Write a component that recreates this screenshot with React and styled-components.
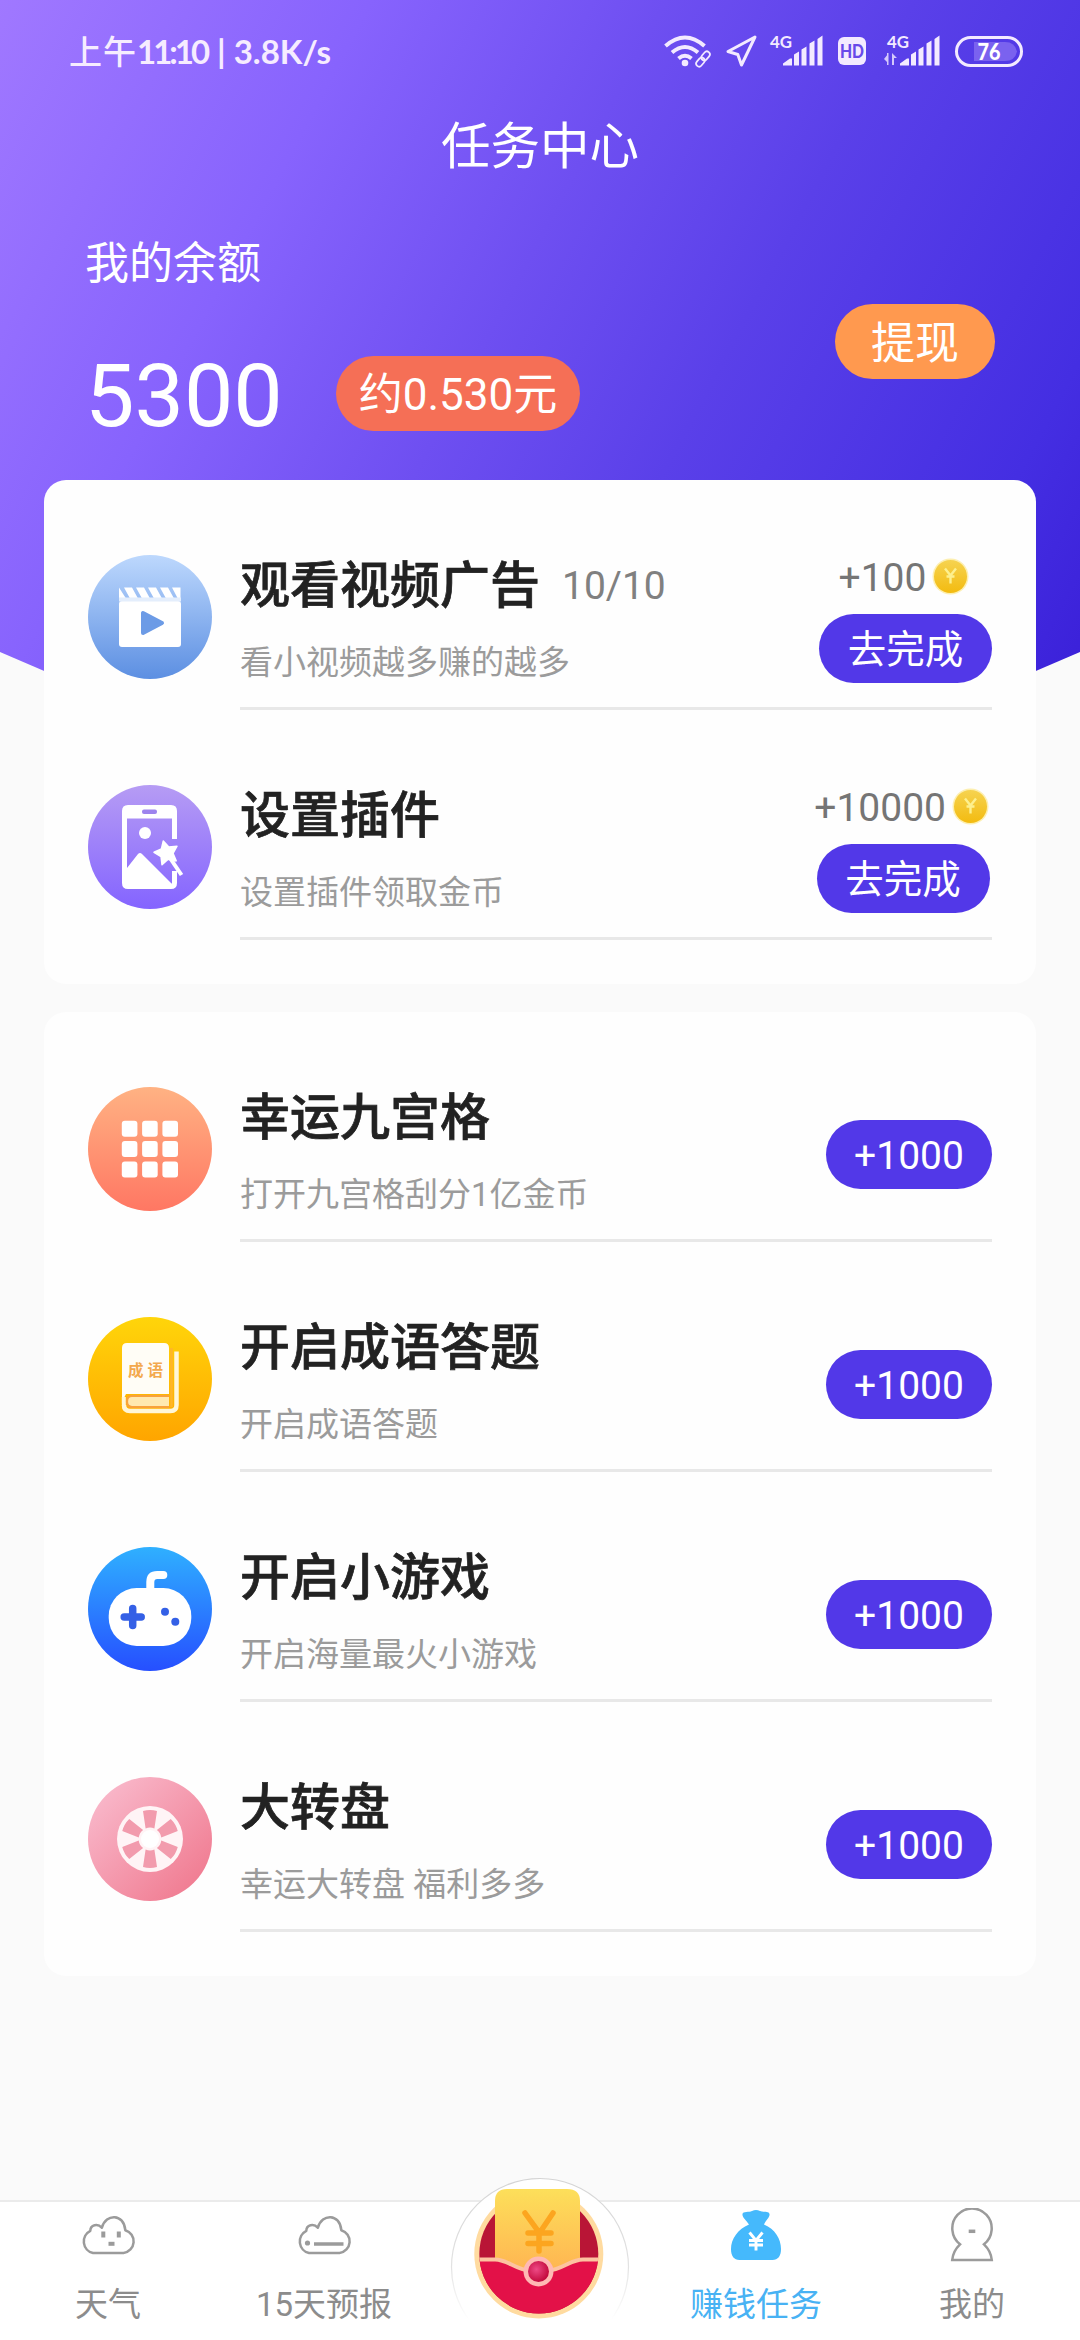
import React from 'react';
import styled, { createGlobalStyle } from 'styled-components';

const GlobalStyle = createGlobalStyle`
  * { box-sizing: border-box; }
  body { margin: 0; background: #fafafa; }
  svg { display: block; flex: none; }
`;

const Page = styled.div`
  position: relative;
  display: flex;
  flex-direction: column;
  width: 1080px;
  height: 2340px;
  overflow: hidden;
  background: #fafafa;
  font-family: Roboto, 'Noto Sans CJK SC', sans-serif;

  &::before {
    content: '';
    position: absolute;
    inset: 0 0 auto 0;
    height: 884px;
    background: linear-gradient(118deg, #a078ff 0%, #8763fd 24%, #6e4ff1 43%, #5a40e9 59%, #442ee2 82%, #3a1fd8 94%);
    clip-path: polygon(0 0, 100% 0, 100% 652px, 50% 884px, 0 652px);
  }
`;

const StatusBar = styled.div`
  position: relative;
  display: flex;
  justify-content: space-between;
  align-items: center;
  height: 102px;
  padding: 0 57px 0 69px;
  color: #f6ecff;
`;

const Clock = styled.div`
  display: flex;
  align-items: center;
  font-family: Lato, 'Noto Sans CJK SC', sans-serif;
  font-size: 33px;
  font-weight: 700;
  line-height: 40px;
  white-space: pre;
`;

const Meridiem = styled.span`
  font-weight: 500;
  letter-spacing: 1px;
`;

const Time = styled.span`
  margin-right: 2px;
  letter-spacing: -3px;
`;

const StatusIcons = styled.div`
  display: flex;
  align-items: center;
`;

const StatusSvg = styled.svg`
  margin-left: ${(p) => p.$gap || 0}px;
  overflow: visible;
  font-family: Lato, sans-serif;
  font-weight: 700;
`;

const TitleBar = styled.h1`
  position: relative;
  margin: 0;
  height: 86px;
  padding-top: 2px;
  line-height: 86px;
  text-align: center;
  color: #fff;
  font-size: 49.5px;
  font-weight: 400;
`;

const Balance = styled.section`
  position: relative;
  display: flex;
  justify-content: space-between;
  align-items: flex-start;
  height: 292px;
  padding: 46px 85px 0 85px;
  color: #fff;
`;

const BalanceLabel = styled.div`
  font-size: 44px;
  line-height: 60px;
`;

const BalanceRow = styled.div`
  display: flex;
  align-items: center;
  height: 104px;
  margin-top: 47px;
`;

const Amount = styled.div`
  width: 251px;
  font-size: 88px;
  line-height: 104px;
  padding-top: 6px;
`;

const Pill = styled.div`
  display: flex;
  align-items: center;
  justify-content: center;
  flex: none;
  width: ${(p) => p.$width}px;
  height: ${(p) => p.$height}px;
  margin-top: ${(p) => p.$top || 0}px;
  padding-top: 4px;
  border-radius: 38px;
  background: ${(p) => p.$color};
  color: #fff;
  font-size: ${(p) => p.$size}px;
  line-height: 1;
  white-space: nowrap;
`;

const Card = styled.section`
  position: relative;
  margin: 0 44px 28px;
  padding-bottom: 44px;
  border-radius: 22px;
  background: #fefefe;
`;

const Row = styled.div`
  display: flex;
  height: 230px;
  padding: 0 44px;
`;

const IconSlot = styled.div`
  padding-top: 75px;
  margin-right: 28px;
`;

const RowBody = styled.div`
  display: flex;
  justify-content: space-between;
  flex: 1;
  border-bottom: 3px solid #e8e8e8;
`;

const TitleLine = styled.div`
  display: flex;
  align-items: center;
  gap: 22px;
  height: 60px;
  margin-top: 76px;
`;

const RowTitle = styled.div`
  color: #222;
  font-size: 50px;
  font-weight: 500;
  line-height: 60px;
  -webkit-text-stroke: 0.7px #222;
`;

const Progress = styled.div`
  color: #808080;
  font-size: 39px;
  line-height: 46px;
`;

const Subtitle = styled.div`
  margin-top: 22px;
  color: #9b9b9b;
  font-size: 33px;
  font-weight: 400;
  line-height: 50px;
`;

const Action = styled.div`
  display: flex;
  flex-direction: column;
  align-items: center;
  padding-top: ${(p) => p.$top}px;
`;

const Reward = styled.div`
  display: flex;
  align-items: center;
  height: 46px;
  margin-bottom: 13px;
  color: #757575;
  font-size: 39px;
  line-height: 48px;
`;

const CoinSvg = styled.svg`
  margin: 0 2px 3px 5px;
`;

const Nav = styled.nav`
  position: relative;
  display: flex;
  height: 140px;
  margin-top: auto;
  border-top: 2px solid #ebebeb;
  background: #fff;
`;

const Tab = styled.div`
  display: flex;
  flex-direction: column;
  align-items: center;
  width: 216px;
  color: ${(p) => (p.$active ? '#48b2f4' : '#8c8c8c')};
  font-size: 33px;
`;

const TabIcon = styled.div`
  display: flex;
  align-items: center;
  height: 66px;
`;

const TabLabel = styled.div`
  margin-top: 12px;
  line-height: 50px;
`;

const CenterButton = styled.div`
  width: 216px;
  margin-top: -32px;
  display: flex;
  justify-content: center;
`;

function Circle({ id, from, to, x2 = 0, children }) {
  return (
    <svg width="124" height="124" viewBox="0 0 124 124">
      <defs>
        <linearGradient id={id} x1="0" y1="0" x2={x2} y2="1">
          <stop offset="0" stopColor={from} />
          <stop offset="1" stopColor={to} />
        </linearGradient>
      </defs>
      <circle cx="62" cy="62" r="62" fill={`url(#${id})`} />
      {children}
    </svg>
  );
}

const starPoints = (cx, cy, outer, inner, turn) =>
  Array.from({ length: 10 }, (_, i) => {
    const r = i % 2 ? inner : outer;
    const a = ((i * 36 + turn) * Math.PI) / 180;
    return `${(cx + r * Math.sin(a)).toFixed(1)},${(cy - r * Math.cos(a)).toFixed(1)}`;
  }).join(' ');

const VideoIcon = () => (
  <Circle id="video" from="#bdd8fd" to="#5c8fe2">
    <rect x="31" y="46" width="62" height="46" rx="3" fill="#fff" />
    <path d="M31 43.500V32.500l7 11zM36 32.500h8l6 11h-8zM48 32.500h8l6 11h-8zM60 32.500h8l6 11h-8zM72 32.500h8l6 11h-8zM84 32.500h8.500v10.500h-3z" fill="#fff" />
    <path d="M31 42.500h62v4H31z" fill="#e4eefc" />
    <path d="M55 58v20l19-10z" fill="#6c9be6" stroke="#6c9be6" strokeWidth="4" strokeLinejoin="round" />
  </Circle>
);

const PhoneIcon = () => (
  <Circle id="phone" from="#b69cf4" to="#8464ff">
    <path d="M86.500 54V26q0-3.500-3.500-3.500H40q-3.500 0-3.500 3.500v72q0 3.500 3.500 3.500h43q3.500 0 3.500-3.500V86" fill="none" stroke="#fff" strokeWidth="5" />
    <path d="M37 22h49v11.500H37zM39 83l11-14q2-2 4 0l30 30v3H39z" fill="#fff" />
    <rect x="54" y="24.500" width="15" height="4.500" rx="2" fill="#9d84ee" />
    <circle cx="57" cy="48" r="6" fill="#fff" />
    <polygon points={starPoints(78.5, 68, 12.5, 6.5, -15)} fill="#fff" stroke="#fff" strokeWidth="1.500" strokeLinejoin="round" />
    <path d="M82 73l11.500 17" stroke="#fff" strokeWidth="4" />
  </Circle>
);

const GridIcon = () => (
  <Circle id="grid" from="#ffb283" to="#ff7763">
    {[0, 1, 2].map((r) =>
      [0, 1, 2].map((c) => (
        <rect key={`${r}${c}`} x={33.8 + c * 20.3} y={33.8 + r * 20.3} width="15.600" height="16" rx="3" fill="#fff" />
      ))
    )}
  </Circle>
);

const BookIcon = () => (
  <Circle id="book" from="#ffd50a" to="#ffa500">
    <path d="M88.500 34.500V88q0 6-6 6H42q-6 0-6-6" fill="none" stroke="#fff6d8" strokeWidth="4.500" />
    <path d="M39 26h37q5 0 5 5v46H38l-4 8V31q0-5 5-5z" fill="#fffdf6" />
    <path d="M33.800 80h4v12h-3q-1-3-1-6z" fill="#fff6d8" />
    <path d="M81 79H44q-5 0-5 5.500t5 5.500h37" fill="#ffe9b0" stroke="#f8a23c" strokeWidth="2.200" />
    <path d="M83.500 31v59" stroke="#ffb52a" strokeWidth="2.500" />
    <text x="57.500" y="59" fontSize="15.500" fontWeight="700" textAnchor="middle" textLength="35" fill="#f3a94e">成语</text>
  </Circle>
);

const GamepadIcon = () => (
  <Circle id="game" from="#2fb0ff" to="#264fff">
    <path d="M62.300 44v-9q0-7 7-7h6" fill="none" stroke="#fff" strokeWidth="8" strokeLinecap="round" />
    <rect x="20.700" y="41" width="82.600" height="58" rx="28" fill="#fff" />
    <path d="M44.700 61.500v17M36.200 70h17" stroke="#3460e6" strokeWidth="7.500" strokeLinecap="round" />
    <circle cx="77" cy="64.700" r="4" fill="#3460e6" />
    <circle cx="87.300" cy="74.700" r="4" fill="#3460e6" />
  </Circle>
);

const WheelIcon = () => (
  <Circle id="wheel" from="#fac0d2" to="#ef7389" x2={1}>
    <circle cx="62" cy="62" r="33" fill="#fff4f6" />
    {[0, 60, 120, 180, 240, 300].map((a) => (
      <path key={a} d="M55 34q7-2 14 0l-2.600 17.500q-4.400-1.800-8.800 0z" fill="#f29bad" transform={`rotate(${a} 62 62)`} />
    ))}
    <circle cx="62" cy="62" r="9" fill="#fff" />
  </Circle>
);

const Coin = () => (
  <CoinSvg width="39" height="39" viewBox="0 0 39 39">
    <defs>
      <linearGradient id="coin" x1="0" y1="0" x2="0" y2="1">
        <stop offset="0" stopColor="#f6d350" />
        <stop offset="1" stopColor="#f3bb10" />
      </linearGradient>
    </defs>
    <circle cx="19.500" cy="19.500" r="18" fill="#fdefb0" />
    <circle cx="19.500" cy="19.500" r="16.500" fill="url(#coin)" />
    <path d="M14 11.500l5.500 7 5.500-7M19.500 18v8.500M15.500 19.500h8" fill="none" stroke="#fdf08e" strokeWidth="2.400" />
  </CoinSvg>
);

const CLOUD = 'M15 39A11.900 11.900 0 0 1 12.300 16.800C12.500 11 19.500 8.800 23.800 13.800C28-1 46-.5 47.300 16.200A11.700 11.700 0 0 1 45.500 39Z';

const CloudIcon = ({ children }) => (
  <svg width="60" height="42" viewBox="0 0 60 42" fill="none" stroke="#9b9b9b" strokeWidth="2.500" strokeLinejoin="round">
    <path d={CLOUD} />
    {children}
  </svg>
);

const WeatherIcon = () => (
  <CloudIcon>
    <path d="M25.300 17.500v6M40.800 17.500v6" strokeWidth="4" />
    <path d="M30.500 29.800h6" strokeWidth="4" />
  </CloudIcon>
);

const ForecastIcon = () => (
  <CloudIcon>
    <circle cx="13.500" cy="29" r="2.600" fill="#9b9b9b" stroke="none" />
    <path d="M20 30h29.500" strokeWidth="3.500" />
  </CloudIcon>
);

const BagIcon = () => (
  <svg width="50" height="50" viewBox="0 0 50 50">
    <path
      d="M18 14.500C15 10 11 7.500 11.500 4 12 1 18 2.500 21 1q4-2 8 0c3 1.500 9 0 9.500 3 .5 3.500-3.500 6-5.500 10.500C44 19 50 29 50 39c0 7-3 11-8.500 11h-33C3 50 0 46 0 39c0-10 7-20 18-24.500z"
      fill="#45b9fc"
    />
    <path d="M18.500 22.500l6.500 8 6.500-8M25 30v10.500M18 30.500h14M18 35h14" fill="none" stroke="#fff" strokeWidth="2.900" />
  </svg>
);

const UserIcon = () => (
  <svg width="44" height="54" viewBox="0 0 44 54" fill="none" stroke="#9b9b9b" strokeWidth="2.500">
    <path d="M10 36.300A19.700 20 0 1 1 34 36.300Q41 43 41.800 52H2.200Q3 43 10 36.300z" />
    <path d="M18.700 23.300h6.600" strokeWidth="3.500" />
  </svg>
);

const EnvelopeIcon = () => (
  <svg width="200" height="172" viewBox="0 0 200 172">
    <defs>
      <linearGradient id="note" x1="0" y1="0" x2="0" y2="1">
        <stop offset="0" stopColor="#fddf5a" />
        <stop offset="1" stopColor="#ffae50" />
      </linearGradient>
      <linearGradient id="rim" x1="0" y1="0" x2="0" y2="1">
        <stop offset="0" stopColor="#d4d4d4" />
        <stop offset="0.500" stopColor="#e2e2e2" />
        <stop offset="0.800" stopColor="#fff" />
      </linearGradient>
      <radialGradient id="bead" cx="0.400" cy="0.400" r="0.600">
        <stop offset="0" stopColor="#ee4a86" />
        <stop offset="1" stopColor="#c40a3e" />
      </radialGradient>
      <clipPath id="pouch">
        <circle cx="98.800" cy="84" r="59.500" />
      </clipPath>
    </defs>
    <circle cx="100" cy="97" r="88.500" fill="#fff" stroke="url(#rim)" strokeWidth="1.200" />
    <circle cx="98.800" cy="84" r="64.500" fill="#ffdba0" />
    <circle cx="98.800" cy="84" r="59.500" fill="#b91536" />
    <path d="M55 115V31q0-12 12-12h60q13 0 13 12v84z" fill="url(#note)" />
    <g clipPath="url(#pouch)">
      <path d="M30 89.500h25c14 0 20 12 44 12s30-12 44-12h27V160H30z" fill="#e31148" stroke="#fdc3a0" strokeWidth="4" />
    </g>
    <path d="M85 43l14.500 20L113 43M99 61v20M88 63h23M88 73.500h23" fill="none" stroke="#fca51f" strokeWidth="5.500" strokeLinecap="round" />
    <circle cx="98.500" cy="101.500" r="15" fill="#ffb9b4" />
    <circle cx="98.500" cy="101.500" r="10.500" fill="url(#bead)" />
  </svg>
);

const WifiIcon = () => (
  <StatusSvg width="48" height="34" viewBox="0 0 48 34" fill="none" stroke="#f3eaff" strokeWidth="4">
    <path d="M1.500 12Q21-5 40.500 12M8 18.500Q21 7.500 34 18.500M14.500 24.500Q21 19 27.500 24.500" />
    <circle cx="21" cy="29" r="3.300" fill="#f3eaff" stroke="none" />
    <g strokeWidth="1.700" transform="rotate(-50 39 25)">
      <rect x="30" y="22" width="10" height="6" rx="3" />
      <rect x="38" y="22" width="10" height="6" rx="3" />
    </g>
  </StatusSvg>
);

const LocationIcon = () => (
  <StatusSvg $gap={14} width="32" height="32" viewBox="0 0 32 32" fill="none" stroke="#f3eaff" strokeWidth="3" strokeLinejoin="round">
    <path d="M29 2L2 16.500l9.800 3L15.500 30z" />
  </StatusSvg>
);

const SignalIcon = ({ data, gap }) => (
  <StatusSvg $gap={gap} width="57" height="34" viewBox="0 0 57 34" fill="#f3eaff">
    <text x="3" y="14" fontSize="17" textLength="22" lengthAdjust="spacingAndGlyphs">4G</text>
    {data && <path d="M4 20v9l-4-4zM3 19h1.500v12H3zM8 19l5 5H10v7H8z" opacity="0.800" />}
    <path d="M16 31.500v-2l7-5h2v7zM27 20.500l5-3v14h-5zM34.500 15.500l5-3v19h-5zM42.500 9.500l5-3v25h-5zM50.500 5l5-3.500v30h-5z" />
  </StatusSvg>
);

const HdIcon = () => (
  <StatusSvg $gap={14} width="28" height="28" viewBox="0 0 28 28">
    <rect width="28" height="28" rx="6" fill="#f3eaff" />
    <text x="14" y="20.500" fontSize="18" fontWeight="900" textAnchor="middle" textLength="24" lengthAdjust="spacingAndGlyphs" fill="#6849ea">HD</text>
  </StatusSvg>
);

const BatteryIcon = () => (
  <StatusSvg $gap={14} width="68" height="31" viewBox="0 0 68 31">
    <rect x="1.500" y="1.500" width="65" height="28" rx="14" fill="none" stroke="#f3eaff" strokeWidth="3" />
    <path d="M19 6h31q10 0 12 9.500-2 9.500-12 9.500H19z" fill="#7a62ef" />
    <text x="34" y="23.500" fontSize="23.500" fontWeight="900" textAnchor="middle" textLength="23" lengthAdjust="spacingAndGlyphs" fill="#fff">76</text>
  </StatusSvg>
);

const dailyTasks = [
  { icon: VideoIcon, title: '观看视频广告', progress: '10/10', sub: '看小视频越多赚的越多', reward: '+100' },
  { icon: PhoneIcon, title: '设置插件', sub: '设置插件领取金币', reward: '+10000' },
];

const gameTasks = [
  { icon: GridIcon, title: '幸运九宫格', sub: '打开九宫格刮分1亿金币' },
  { icon: BookIcon, title: '开启成语答题', sub: '开启成语答题' },
  { icon: GamepadIcon, title: '开启小游戏', sub: '开启海量最火小游戏' },
  { icon: WheelIcon, title: '大转盘', sub: '幸运大转盘 福利多多' },
];

function TaskRow({ icon: Icon, title, progress, sub, reward }) {
  return (
    <Row>
      <IconSlot>
        <Icon />
      </IconSlot>
      <RowBody>
        <div>
          <TitleLine>
            <RowTitle>{title}</RowTitle>
            {progress && <Progress>{progress}</Progress>}
          </TitleLine>
          <Subtitle>{sub}</Subtitle>
        </div>
        {reward ? (
          <Action $top={75}>
            <Reward>
              {reward}
              <Coin />
            </Reward>
            <Pill $width={173} $height={69} $size={38.5} $color="#5238e8">去完成</Pill>
          </Action>
        ) : (
          <Action $top={108}>
            <Pill $width={166} $height={69} $size={39} $color="#5238e8">+1000</Pill>
          </Action>
        )}
      </RowBody>
    </Row>
  );
}

export default function App() {
  return (
    <Page>
      <GlobalStyle />
      <StatusBar>
        <Clock>
          <Meridiem>上午</Meridiem>
          <Time>11:10</Time>
          <span> | 3.8K/s</span>
        </Clock>
        <StatusIcons>
          <WifiIcon />
          <LocationIcon />
          <SignalIcon gap={9} />
          <HdIcon />
          <SignalIcon gap={18} data />
          <BatteryIcon />
        </StatusIcons>
      </StatusBar>
      <TitleBar>任务中心</TitleBar>
      <Balance>
        <div>
          <BalanceLabel>我的余额</BalanceLabel>
          <BalanceRow>
            <Amount>5300</Amount>
            <Pill $width={244} $height={75} $size={44} $color="#f56f56">约0.530元</Pill>
          </BalanceRow>
        </div>
        <Pill $width={160} $height={75} $size={44} $top={70} $color="#ff994f">提现</Pill>
      </Balance>
      <Card>
        {dailyTasks.map((t) => (
          <TaskRow key={t.title} {...t} />
        ))}
      </Card>
      <Card>
        {gameTasks.map((t) => (
          <TaskRow key={t.title} {...t} />
        ))}
      </Card>
      <Nav>
        <Tab>
          <TabIcon><WeatherIcon /></TabIcon>
          <TabLabel>天气</TabLabel>
        </Tab>
        <Tab>
          <TabIcon><ForecastIcon /></TabIcon>
          <TabLabel>15天预报</TabLabel>
        </Tab>
        <CenterButton>
          <EnvelopeIcon />
        </CenterButton>
        <Tab $active>
          <TabIcon><BagIcon /></TabIcon>
          <TabLabel>赚钱任务</TabLabel>
        </Tab>
        <Tab>
          <TabIcon><UserIcon /></TabIcon>
          <TabLabel>我的</TabLabel>
        </Tab>
      </Nav>
    </Page>
  );
}
